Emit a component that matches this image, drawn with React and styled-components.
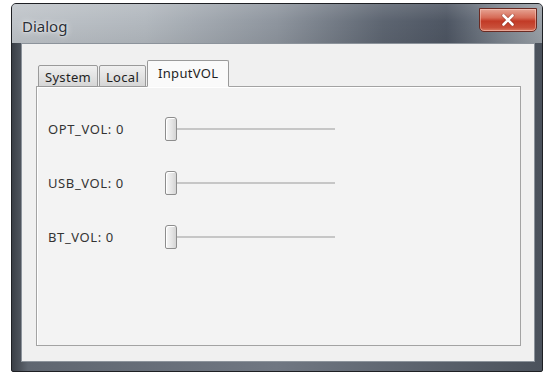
import React from "react";
import styled, { createGlobalStyle } from "styled-components";

const Global = createGlobalStyle`
  html, body { margin: 0; padding: 0; background: #ffffff; }
  body { font-family: "Noto Sans", "Liberation Sans", sans-serif; }
`;

const Page = styled.div`
  width: 550px;
  height: 378px;
  padding: 3px 0 0 11px;
  box-sizing: border-box;
`;

const Window = styled.div`
  width: 532px;
  height: 369px;
  box-sizing: border-box;
  border-radius: 5px 5px 2px 2px;
  border: 1px solid #1e2024;
  background: linear-gradient(90deg, #3a3f46 0%, #5f6670 3%, #707782 50%, #4b525c 100%);
  display: flex;
  flex-direction: column;
  overflow: hidden;
`;

const TitleBar = styled.div`
  height: 39px;
  flex: none;
  display: flex;
  align-items: flex-start;
  justify-content: space-between;
  padding: 0 5px 0 10px;
  background:
    linear-gradient(180deg, rgba(255,255,255,0.12) 0%, rgba(255,255,255,0) 45%, rgba(0,0,0,0.05) 100%),
    linear-gradient(90deg, #bfc4c9 0%, #b2b8be 25%, #8e959e 50%, #5d6571 70%, #4e5663 82%, #7b838d 92%, #9aa1a8 100%);
`;

const Title = styled.span`
  font-size: 15px;
  color: #2b2f36;
  line-height: 1;
  margin-top: 15px;
  text-shadow: 0 0 6px rgba(255,255,255,0.9), 0 0 2px rgba(255,255,255,0.8);
`;

const CloseButton = styled.div`
  width: 58px;
  height: 24px;
  margin-top: 4px;
  box-sizing: border-box;
  border: 1px solid #6a2a22;
  border-radius: 0 0 5px 5px;
  background: linear-gradient(180deg, #e6a494 0%, #d66a55 40%, #c23a26 55%, #c9503a 85%, #dc8068 100%);
  box-shadow: inset 0 0 0 1px rgba(255,220,210,0.45);
  display: flex;
  align-items: center;
  justify-content: center;
`;

const Body = styled.div`
  flex: 1;
  display: flex;
  padding: 0 7px 9px 9px;
`;

const Client = styled.div`
  flex: 1;
  background: #f0f0f0;
  border: 1px solid #8c939b;
  display: flex;
  flex-direction: column;
  padding: 16px 13px 15px 14px;
`;

const TabStrip = styled.div`
  display: flex;
  align-items: flex-end;
  padding-left: 2px;
  height: 27px;
  position: relative;
  z-index: 1;
  margin-bottom: -1px;
`;

const Tab = styled.div`
  box-sizing: border-box;
  height: ${(p) => (p.$active ? "27px" : "22px")};
  padding: ${(p) => (p.$active ? "4px 10px 0" : "3px 6px 0")};
  margin-right: ${(p) => (p.$active ? "0" : "1px")};
  border: 1px solid #9a9a9a;
  border-bottom: ${(p) => (p.$active ? "1px solid #f9f9f9" : "1px solid #9a9a9a")};
  border-radius: 2px 2px 0 0;
  background: ${(p) =>
    p.$active ? "#fafafa" : "linear-gradient(180deg, #f0f0f0 0%, #e3e3e3 50%, #d6d6d6 100%)"};
  font-size: 13px;
  letter-spacing: 0.3px;
  color: #1f1f1f;
  line-height: 16px;
`;

const Pane = styled.div`
  flex: 1;
  border: 1px solid #a3a3a3;
  background: #f3f3f3;
  box-shadow: inset 1px 1px 0 #ffffff;
  padding: 30px 0 0 11px;
  display: flex;
  flex-direction: column;
  gap: 30px;
`;

const Row = styled.div`
  display: flex;
  align-items: center;
  height: 24px;
`;

const Label = styled.span`
  width: 117px;
  font-size: 13px;
  color: #333;
  letter-spacing: 0.6px;
`;

const Slider = styled.div`
  display: flex;
  align-items: center;
`;

const Thumb = styled.div`
  width: 12px;
  height: 24px;
  box-sizing: border-box;
  border: 1px solid #8d8d8d;
  border-radius: 3px 3px 2px 2px;
  background: linear-gradient(90deg, #f7f7f7 0%, #e4e4e4 60%, #d4d4d4 100%);
  box-shadow: inset 1px 1px 0 #ffffff;
`;

const Track = styled.div`
  width: 158px;
  height: 2px;
  background: #c6c6c6;
`;

const rows = ["OPT_VOL: 0", "USB_VOL: 0", "BT_VOL: 0"];

export default function App() {
  return (
    <>
      <Global />
      <Page>
        <Window>
          <TitleBar>
            <Title>Dialog</Title>
            <CloseButton>
              <svg width="14" height="12" viewBox="0 0 14 12">
                <path d="M2.5 1.5 L11.5 10.5 M11.5 1.5 L2.5 10.5" stroke="#5a1a12" strokeWidth="4" strokeLinecap="round" opacity="0.35" />
                <path d="M2.5 1.5 L11.5 10.5 M11.5 1.5 L2.5 10.5" stroke="#ffffff" strokeWidth="2.6" strokeLinecap="round" />
              </svg>
            </CloseButton>
          </TitleBar>
          <Body>
            <Client>
              <TabStrip>
                <Tab>System</Tab>
                <Tab>Local</Tab>
                <Tab $active>InputVOL</Tab>
              </TabStrip>
              <Pane>
                {rows.map((r) => (
                  <Row key={r}>
                    <Label>{r}</Label>
                    <Slider>
                      <Thumb />
                      <Track />
                    </Slider>
                  </Row>
                ))}
              </Pane>
            </Client>
          </Body>
        </Window>
      </Page>
    </>
  );
}
